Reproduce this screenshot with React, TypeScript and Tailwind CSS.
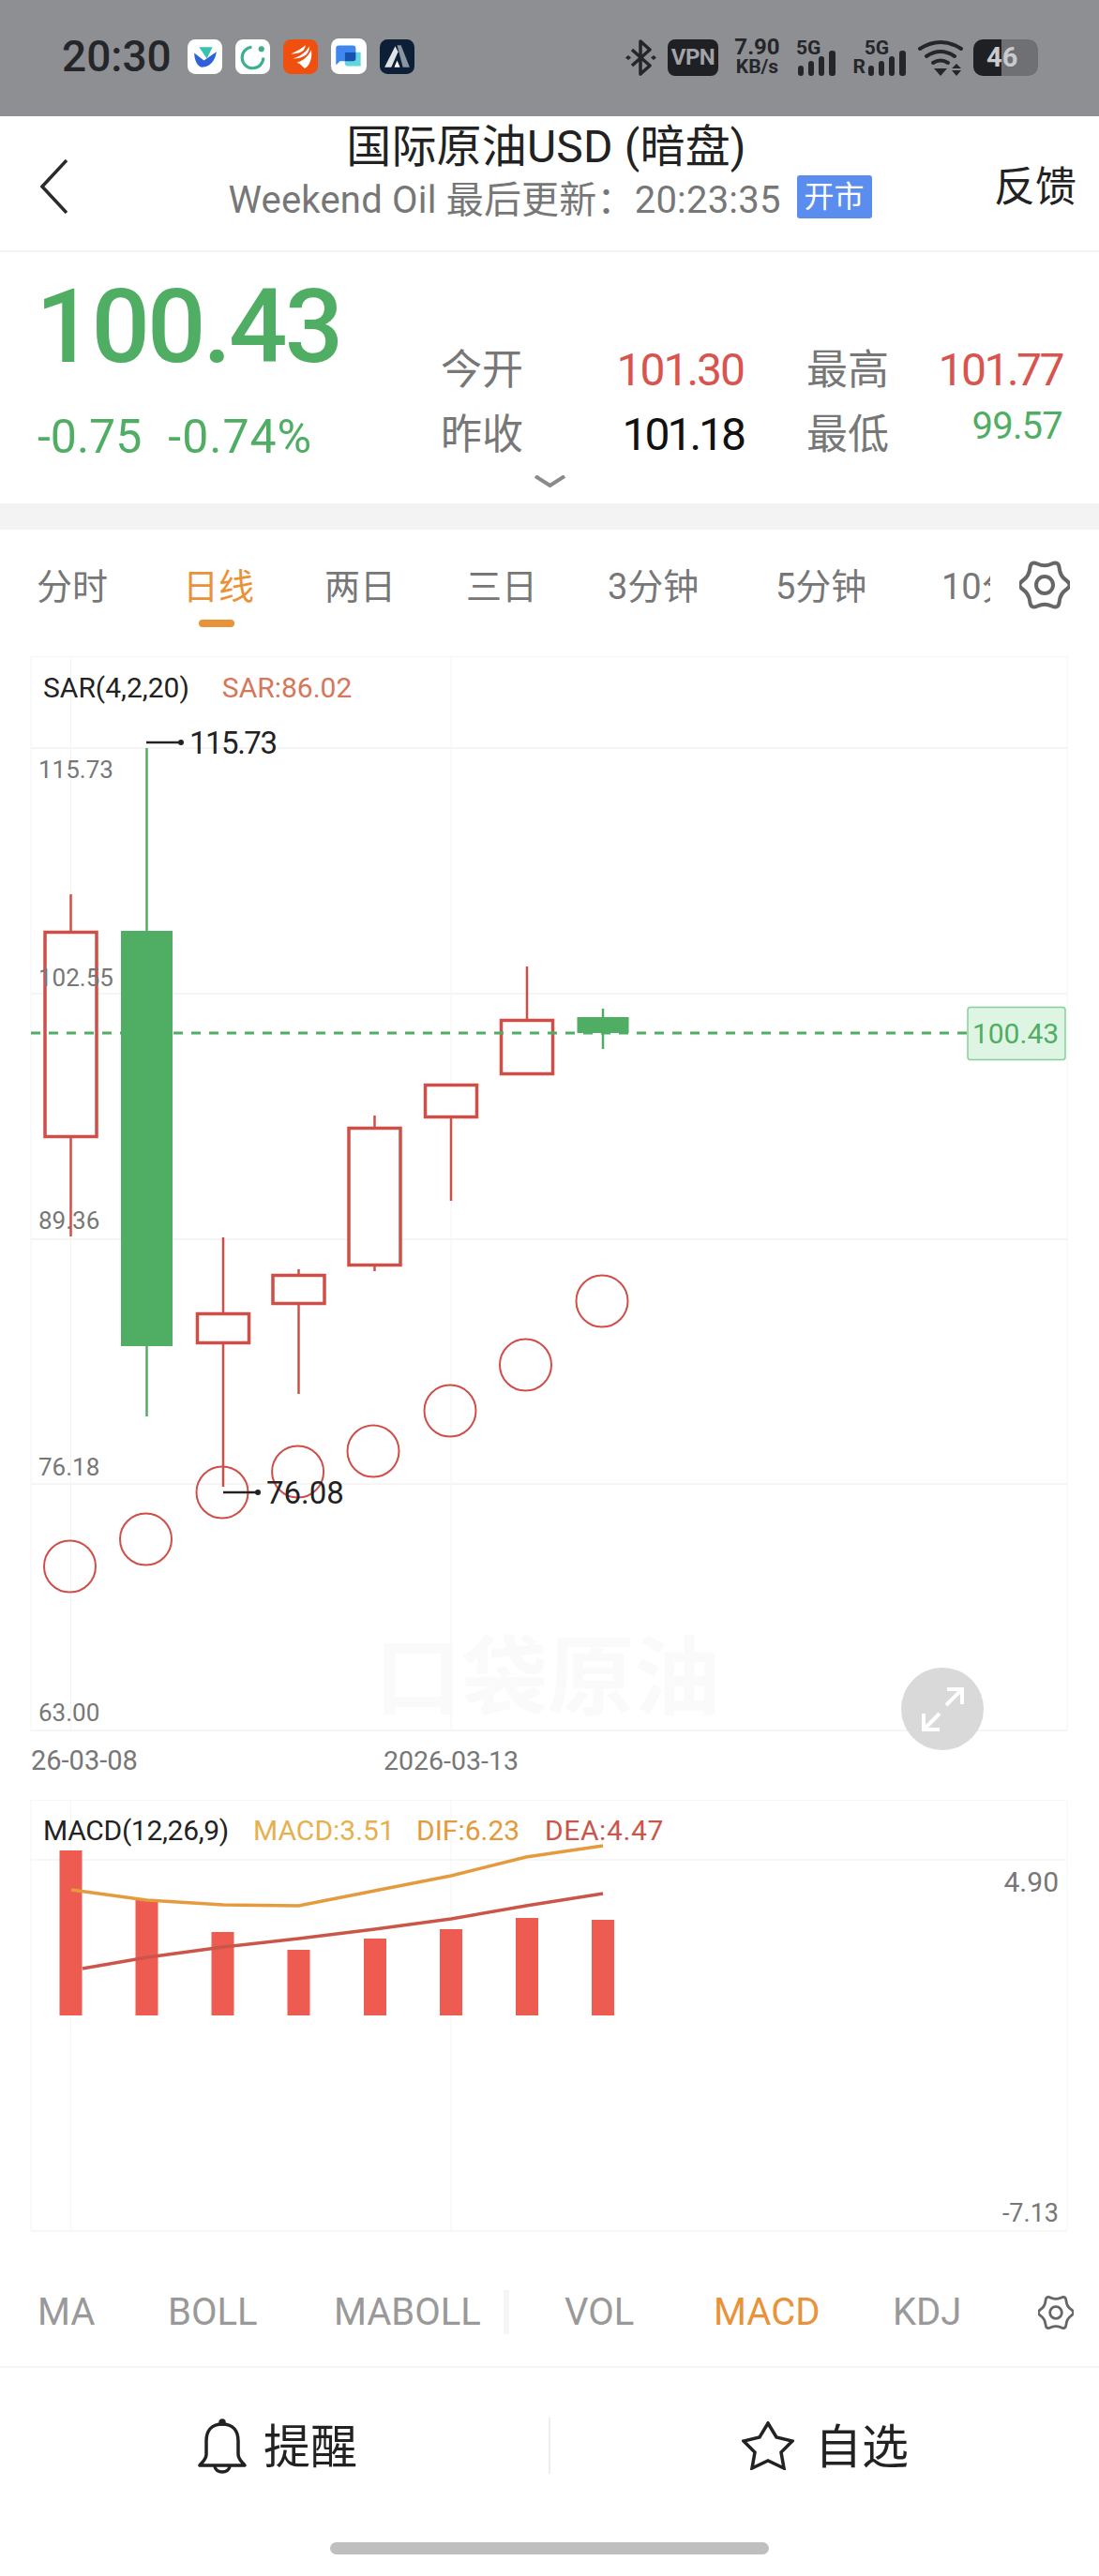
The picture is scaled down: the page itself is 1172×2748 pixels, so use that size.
import React from 'react';

const sans = 'font-[Roboto,"Noto_Sans_CJK_SC",sans-serif]';

const RED = '#cf4f48';
const GREEN = '#4fae63';

// candle data is in page pixels, read off the picture
const candles = [
  { x: 75.5, high: 954, top: 993, bottom: 1214, low: 1319, up: true },
  { x: 156.5, high: 798, top: 993, bottom: 1436, low: 1511, up: false },
  { x: 238, high: 1320, top: 1400, bottom: 1434, low: 1586, up: true },
  { x: 318.5, high: 1354, top: 1359, bottom: 1392, low: 1487, up: true },
  { x: 399.5, high: 1190, top: 1202, bottom: 1351, low: 1356, up: true },
  { x: 481, high: 1156, top: 1156, bottom: 1193, low: 1281, up: true },
  { x: 562, high: 1031, top: 1087, bottom: 1147, low: 1147, up: true },
  { x: 643, high: 1076, top: 1085, bottom: 1102, low: 1119, up: false },
];

const sarDots = [
  [74.5, 1671],
  [155.5, 1642],
  [237, 1592],
  [317.6, 1570],
  [398, 1548],
  [480, 1505],
  [560.5, 1456],
  [642, 1388],
];

const priceLabels = [
  ['115.73', 830],
  ['102.55', 1052],
  ['89.36', 1311],
  ['76.18', 1574],
  ['63.00', 1836],
] as const;

const macdBars = [1974, 2027, 2061, 2080, 2068, 2058, 2046, 2048];
const barX = [63.5, 144.5, 225.5, 306.5, 388, 469, 550, 631];
const difLine = '76,2016 156.5,2027 238,2032 318.5,2033 399.5,2017 481,2001 561,1981 643,1969';
const deaLine = '88,2100 157,2088 238,2077 318.5,2068 399.5,2058 481,2047 561,2033 643,2020';

const periodTabs = [
  { label: '分时', w: 'w-[156px]' },
  { label: '日线', w: 'w-[151px]', active: true },
  { label: '两日', w: 'w-[151px]' },
  { label: '三日', w: 'w-[151px]' },
  { label: '3分钟', w: 'w-[179px]' },
  { label: '5分钟', w: 'w-[177px]' },
  { label: '10分钟', w: 'w-[52px] overflow-hidden' },
];

// wavy six lobed outline: quadratic spline through the midpoints of lobe and valley points
const gearPoints = Array.from({ length: 12 }, (_, i) => {
  const r = i % 2 === 0 ? 30 : 19;
  const a = (i * Math.PI) / 6;
  return [27 + r * Math.cos(a), 27 + r * Math.sin(a)];
});
const mid = (a: number[], b: number[]) => `${(a[0] + b[0]) / 2} ${(a[1] + b[1]) / 2}`;
const gearPath =
  `M${mid(gearPoints[11], gearPoints[0])} ` +
  gearPoints.map((p, i) => `Q${p[0]} ${p[1]} ${mid(p, gearPoints[(i + 1) % 12])}`).join(' ') +
  ' Z';

const GearIcon = ({ className }: { className: string }) => (
  <svg viewBox="0 0 54 54" className={className} fill="none" stroke="#666" strokeWidth="4" strokeLinejoin="round">
    <path d={gearPath} />
    <circle cx="27" cy="27" r="9" />
  </svg>
);

const SignalBars = () => (
  <svg viewBox="0 0 44 27" className="h-[27px] w-[44px]" fill="#25262a">
    <rect x="2" y="16" width="6" height="11" rx="3" />
    <rect x="13" y="11" width="6" height="16" rx="3" />
    <rect x="24" y="6" width="6" height="21" rx="3" />
    <rect x="35" y="0" width="7" height="27" rx="3" />
  </svg>
);

const StatusBar = () => (
  <div className="flex h-[124px] items-start justify-between bg-[#8e8f93] pl-[66px] pr-[65px] pt-[40px] text-[#25262a]">
    <div className="flex items-center gap-[17px]">
      <span className={`${sans} text-[46px] font-medium leading-[40px]`}>20:30</span>
      <div className="flex items-center gap-[14px]">
        <svg viewBox="0 0 36 36" className="h-[37px] w-[37px]">
          <rect width="36" height="36" rx="8" fill="#fff" />
          <path d="M7 14 L17 22 L30 13 C29 22 23 29 15 29 C10 28 7 21 7 14 Z" fill="#2f62d8" />
          <path d="M12 8 L26 8 L20 20 Z" fill="#38c4aa" />
        </svg>
        <svg viewBox="0 0 36 36" className="h-[37px] w-[37px]">
          <rect width="36" height="36" rx="8" fill="#fff" />
          <path d="M17 8 A11 11 0 1 0 29 19" fill="none" stroke="#3fae8e" strokeWidth="3" />
          <circle cx="27" cy="10" r="3" fill="#3fae8e" />
        </svg>
        <svg viewBox="0 0 36 36" className="h-[37px] w-[37px]">
          <rect width="36" height="36" rx="8" fill="#f0500f" />
          <path d="M8 15 C14 12 20 9 23 6 C23 11 19 15 8 15 Z M10 20 C16 18 24 14 27 7 C28 14 22 20 10 20 Z M14 24 C20 23 26 18 29 11 C31 20 26 30 22 30 C20 28 18 25 14 24 Z" fill="#fff" />
        </svg>
        <svg viewBox="0 0 36 36" className="h-[38px] w-[38px]">
          <rect width="36" height="36" rx="8" fill="#fff" />
          <path d="M5 10 Q5 7 8 7 L22 7 Q25 7 25 10 L25 20 Q25 23 22 23 L9 23 L5 27 Z" fill="#3f86ee" />
          <path d="M14 14 L30 14 L30 28 L18 28 Q14 28 14 25 Z" fill="#62d6de" />
          <path d="M14 14 L25 14 L25 20 Q25 23 22 23 L14 23 Z" fill="#1650b0" />
        </svg>
        <svg viewBox="0 0 36 36" className="h-[37px] w-[37px]">
          <rect width="36" height="36" rx="8" fill="#0c1f36" />
          <path d="M18 6 L22 6 L31 29 L24 29 Z" fill="#8b95a0" />
          <path d="M16 7 L19 13 L12 29 L5 29 Z" fill="#dfe3e6" />
          <path d="M18 22 L21 29 L15 29 Z" fill="#fff" />
        </svg>
      </div>
    </div>
    <div className="flex items-center">
      <svg viewBox="0 0 33 39" className="h-[39px] w-[33px]" fill="none" stroke="#25262a" strokeWidth="3.5" strokeLinejoin="round">
        <path d="M7 11 L26 28 L16 37 L16 2 L26 11 L7 28" />
        <path d="M0 19.5 L3 17 L6 19.5 L3 22 Z M27 19.5 L30 17 L33 19.5 L30 22 Z" fill="#25262a" stroke="none" />
      </svg>
      <span className={`${sans} ml-[12px] flex h-[39px] w-[54px] items-center justify-center rounded-[8px] bg-[#1f2024] text-[24px] font-bold tracking-[-0.5px] text-[#a2a3a7]`}>VPN</span>
      <div className={`${sans} ml-[19px] flex w-[45px] flex-col items-center font-bold`}>
        <span className="text-[24px] leading-[20px]">7.90</span>
        <span className="text-[21px] leading-[22px]">KB/s</span>
      </div>
      <div className="ml-[19px] flex w-[45px] flex-col items-start">
        <span className={`${sans} text-[21px] font-bold leading-[18px]`}>5G</span>
        <div className="-mt-[6px]">
          <SignalBars />
        </div>
      </div>
      <div className="ml-[12px] flex w-[62px] flex-col items-end">
        <span className={`${sans} mr-[20px] text-[21px] font-bold leading-[18px]`}>5G</span>
        <div className="-mt-[6px] flex items-end">
          <span className={`${sans} mr-[1px] text-[21px] font-bold leading-[20px]`}>R</span>
          <SignalBars />
        </div>
      </div>
      <svg viewBox="0 0 50 39" className="ml-[11px] h-[39px] w-[50px]" fill="none" stroke="#25262a" strokeWidth="4" strokeLinecap="round">
        <path d="M2 10 Q24 -4 46 10" />
        <path d="M9 18 Q24 8 39 18" />
        <path d="M16 25 Q24 20 32 25" />
        <path d="M17 31 L31 31 L24 39 Z" fill="#25262a" stroke="none" />
        <path d="M41 26 L46 31 L36 31 Z M36 33 L46 33 L41 39 Z" fill="#25262a" stroke="none" />
      </svg>
      <div className="relative ml-[9px] flex h-[39px] w-[69px] overflow-hidden rounded-[10px]">
        <div className="w-[30px] bg-[#1f2024]" />
        <div className="flex-1 rounded-r-[10px] bg-[#6f7074]" />
        <span className={`${sans} absolute left-[14px] top-0 text-[29px] font-bold leading-[39px] text-[#c9cacd]`}>46</span>
      </div>
    </div>
  </div>
);

const Header = () => (
  <div className={`${sans} relative flex h-[145px] flex-col items-center border-b-2 border-[#f3f3f3] bg-white`}>
    <svg viewBox="0 0 29 58" className="absolute left-[43px] top-[46px] h-[58px] w-[29px]" fill="none" stroke="#2b2b2b" strokeWidth="3.5">
      <path d="M28 1 L2 29 L28 57" />
    </svg>
    <h1 className="mt-[3px] pr-[7px] text-[48px] leading-[60px] tracking-[0.2px] text-[#222]">国际原油USD (暗盘)</h1>
    <div className="mt-[3px] flex items-center gap-[17px] pl-[1px]">
      <span className="text-[40px] leading-[48px] tracking-[0.2px] text-[#777]">Weekend Oil 最后更新：20:23:35</span>
      <span className="flex h-[46px] w-[80px] -translate-y-[4px] items-center justify-center rounded-[3px] bg-[#5b8def] text-[32px] text-white">开市</span>
    </div>
    <span className="absolute right-[24px] top-[46px] text-[44px] leading-[60px] text-[#222]">反馈</span>
  </div>
);

const Quote = () => (
  <div className={`${sans} relative flex h-[268px] bg-white`}>
    <div className="w-[470px] pl-[38px]">
      <div className="mt-[15px] text-[110px] font-medium leading-[130px] tracking-[-3px] text-[#4fae63]">100.43</div>
      <div className="mt-[24px] flex gap-[28px] pl-[2px] text-[50px] leading-[56px] text-[#4fae63]">
        <span>-0.75</span>
        <span className="tracking-[1px]">-0.74%</span>
      </div>
    </div>
    <div className="mt-[91px] grid h-fit grid-cols-[88px_235px_157px_183px] grid-rows-[69px_69px] items-center">
      <span className="text-[44px] text-[#777]">今开</span>
      <span className="text-right text-[48px] tracking-[-2px] text-[#d9534f]">101.30</span>
      <span className="ml-[67px] text-[44px] text-[#777]">最高</span>
      <span className="text-right text-[48px] tracking-[-2.5px] text-[#d9534f]">101.77</span>
      <span className="text-[44px] text-[#777]">昨收</span>
      <span className="text-right text-[48px] tracking-[-3px] text-[#111]">101.18</span>
      <span className="ml-[67px] text-[44px] text-[#777]">最低</span>
      <span className="mb-[18px] text-right text-[40px] tracking-[-0.8px] text-[#4fae63]">99.57</span>
    </div>
    <svg viewBox="0 0 33 13" className="absolute left-[570px] top-[238px] h-[13px] w-[33px]" fill="none" stroke="#8a8a8a" strokeWidth="4">
      <path d="M1 1 L16.5 11 L32 1" />
    </svg>
  </div>
);

const PeriodTabs = () => (
  <div className={`${sans} flex h-[135px] items-start bg-white pl-[39px] pt-[36px]`}>
    {periodTabs.map((tab) => (
      <div key={tab.label} className={`flex shrink-0 flex-col ${tab.w}`}>
        <span className={`whitespace-nowrap text-[38px] leading-[50px] ${tab.active ? 'text-[#e8933a]' : 'text-[#777]'}`}>{tab.label}</span>
        {tab.active && <span className="ml-[17px] mt-[10px] h-[8px] w-[38px] rounded-full bg-[#e8933a]" />}
      </div>
    ))}
    <GearIcon className="-mt-[4px] ml-[31px] h-[54px] w-[54px] shrink-0" />
  </div>
);

const KlineChart = () => (
  <div className={`${sans} relative h-[1220px]`}>
    <svg viewBox="0 700 1172 1220" className="h-[1220px] w-[1172px]">
      <g stroke="#f2f2f2" strokeWidth="1.5">
        {[700, 798, 1060, 1322, 1583, 1846].map((y) => (
          <line key={y} x1="33" x2="1138" y1={y} y2={y} />
        ))}
      </g>
      <g stroke="#f4f4f4" strokeWidth="1">
        {[33, 75.5, 481, 1138].map((x) => (
          <line key={x} x1={x} x2={x} y1="700" y2="1846" />
        ))}
      </g>
      <text x="400" y="1822" fontSize="92" fontWeight="700" fill="#fafafa">口袋原油</text>
      {candles.map((c) => {
        const color = c.up ? RED : GREEN;
        return (
          <g key={c.x}>
            <line x1={c.x} x2={c.x} y1={c.high} y2={c.low} stroke={color} strokeWidth="2.5" />
            <rect
              x={c.x - 27.5}
              y={c.top + (c.up ? 1.5 : 0)}
              width="55"
              height={c.bottom - c.top - (c.up ? 3 : 0)}
              fill={c.up ? '#fff' : GREEN}
              stroke={c.up ? RED : 'none'}
              strokeWidth="3.5"
            />
          </g>
        );
      })}
      {sarDots.map(([cx, cy]) => (
        <circle key={cx} cx={cx} cy={cy} r="27.5" fill="none" stroke={RED} strokeWidth="2" />
      ))}
      <line x1="33" x2="1032" y1="1102" y2="1102" stroke={GREEN} strokeWidth="3" strokeDasharray="10 9" />
      <rect x="1032" y="1074.5" width="104" height="56" rx="3" fill="#dff5e3" stroke="#86d09b" strokeWidth="1.5" />
      <text x="1083" y="1113" fontSize="30" textAnchor="middle" fill={GREEN}>100.43</text>
      {priceLabels.map(([label, y]) => (
        <text key={label} x="41" y={y} fontSize="26" fill="#777">{label}</text>
      ))}
      <line x1="156" x2="193" y1="792" y2="792" stroke="#222" strokeWidth="2.5" />
      <circle cx="193" cy="792" r="3" fill="#222" />
      <text x="202" y="804" fontSize="33" fill="#222" className="tracking-[-1.5px]">115.73</text>
      <line x1="238" x2="274" y1="1592" y2="1592" stroke="#222" strokeWidth="2.5" />
      <circle cx="275" cy="1592" r="3" fill="#222" />
      <text x="284" y="1604" fontSize="33" fill="#222">76.08</text>
      <circle cx="1005" cy="1823" r="44" fill="#d9d9d9" />
      <g stroke="#fff" strokeWidth="4" fill="none">
        <path d="M1010 1802 L1026 1802 L1026 1818 M1026 1802 L1009 1819" />
        <path d="M985 1828 L985 1845 L1002 1845 M985 1845 L1002 1828" />
      </g>
      <text x="33" y="1888" fontSize="29" fill="#777">26-03-08</text>
      <text x="481" y="1888" fontSize="28.5" textAnchor="middle" fill="#777">2026-03-13</text>
    </svg>
    <div className="absolute left-[46px] top-[16px] flex gap-[35px] text-[30px] leading-[36px]">
      <span className="text-[#222]">SAR(4,2,20)</span>
      <span className="text-[#d4775a]">SAR:86.02</span>
    </div>
  </div>
);

const MacdChart = () => (
  <div className={`${sans} relative h-[461px]`}>
    <svg viewBox="0 1920 1172 461" className="h-[461px] w-[1172px]">
      <g stroke="#f4f4f4" strokeWidth="1.5">
        {[1920, 1984, 2380].map((y) => (
          <line key={y} x1="33" x2="1138" y1={y} y2={y} />
        ))}
      </g>
      <g stroke="#f5f5f5" strokeWidth="1">
        {[33, 75.5, 481, 1138].map((x) => (
          <line key={x} x1={x} x2={x} y1="1920" y2="2380" />
        ))}
      </g>
      {macdBars.map((top, i) => (
        <rect key={barX[i]} x={barX[i]} y={top} width="24" height={2150 - top} fill="#ee5b50" />
      ))}
      <polyline points={difLine} fill="none" stroke="#e59b3d" strokeWidth="3.5" />
      <polyline points={deaLine} fill="none" stroke="#cc5549" strokeWidth="3.5" />
      <text x="1129" y="2018" fontSize="30" textAnchor="end" fill="#777">4.90</text>
      <text x="1129" y="2370" fontSize="27" textAnchor="end" fill="#777">-7.13</text>
    </svg>
    <div className="absolute left-[46px] top-[15px] flex text-[30px] leading-[36px]">
      <span className="w-[224px] tracking-[-0.3px] text-[#222]">MACD(12,26,9)</span>
      <span className="w-[174px] text-[#e6b04e]">MACD:3.51</span>
      <span className="w-[137px] text-[#e49a3c]">DIF:6.23</span>
      <span className="tracking-[0.6px] text-[#c9564a]">DEA:4.47</span>
    </div>
  </div>
);

const IndicatorTabs = () => (
  <div className={`${sans} relative flex h-[145px] items-start border-b-2 border-[#f5f5f5] bg-white pl-[40px] pt-[62px] text-[40px] leading-[48px] text-[#999]`}>
    <span className="w-[139px]">MA</span>
    <span className="w-[177px]">BOLL</span>
    <span className="w-[246px]">MABOLL</span>
    <span className="w-[159px]">VOL</span>
    <span className="w-[191px] text-[#e8933a]">MACD</span>
    <span className="w-[155px]">KDJ</span>
    <GearIcon className="mt-[5px] h-[38px] w-[38px] shrink-0" />
    <span className="absolute left-[537px] top-[62px] h-[47px] w-[6px] bg-[#f5f5f5]" />
  </div>
);

const BottomBar = () => (
  <div className={`${sans} relative flex h-[222px] flex-col bg-white text-[50px] text-[#222]`}>
    <div className="flex h-[186px] items-start pt-[53px]">
      <div className="flex h-[60px] w-[587px] items-center justify-end gap-[18px] border-r-2 border-[#eee] pr-[204px]">
        <svg viewBox="0 0 52 59" className="h-[59px] w-[52px] shrink-0" fill="none" stroke="#222" strokeWidth="3.5" strokeLinejoin="round">
          <path d="M26 6 C14 6 9 14 9 24 L9 38 C9 44 4 47 2 50 L50 50 C48 47 43 44 43 38 L43 24 C43 14 38 6 26 6 Z" />
          <path d="M18 51 C19 59 33 59 34 51" />
          <circle cx="26" cy="4" r="2" fill="#222" />
        </svg>
        <span className="mt-[4px] leading-[60px]">提醒</span>
      </div>
      <div className="flex h-[60px] flex-1 items-center gap-[22px] pl-[204px]">
        <svg viewBox="0 0 56 52" className="h-[52px] w-[56px] shrink-0" fill="none" stroke="#222" strokeWidth="3.5" strokeLinejoin="miter">
          <path d="M28 2 L37 17 L54 21 L42 33 L45 50 L28 42 L11 50 L14 33 L2 21 L19 17 Z" />
        </svg>
        <span className="mt-[4px] leading-[60px]">自选</span>
      </div>
    </div>
    <div className="mx-auto h-[13px] w-[468px] rounded-full bg-[#bfbfbf]" />
  </div>
);

export default function App() {
  return (
    <div className="flex h-[2748px] w-[1172px] flex-col overflow-hidden bg-white">
      <StatusBar />
      <Header />
      <Quote />
      <div className="h-[28px] bg-[#f3f3f3]" />
      <PeriodTabs />
      <KlineChart />
      <MacdChart />
      <IndicatorTabs />
      <BottomBar />
    </div>
  );
}
